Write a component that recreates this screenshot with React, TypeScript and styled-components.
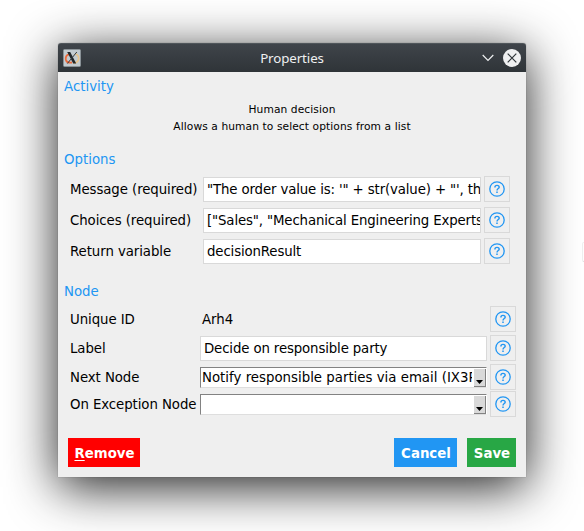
import React from "react";
import styled, { createGlobalStyle } from "styled-components";

const GlobalStyle = createGlobalStyle`
  * { box-sizing: border-box; }
  body { margin: 0; background: #fff; overflow: hidden; }
`;

const Desktop = styled.div`
  position: relative;
  width: 584px;
  height: 531px;
  padding: 43px 58px 0;
  overflow: hidden;
  background: #fff;
  font-family: "DejaVu Sans", sans-serif;
  font-size: 13.33px;
  color: #000;
`;

const EdgeTab = styled.div`
  position: absolute;
  left: 582px;
  top: 242px;
  width: 12px;
  height: 20px;
  border: 1px solid #eeeeee;
  border-bottom-color: #dddddd;
  border-radius: 2px;
`;

const Dialog = styled.main`
  width: 468px;
  height: 434px;
  background: #efefef;
  border-radius: 3px 3px 0 0;
  box-shadow: 0 0 1px rgba(0, 0, 0, 0.5), 0 10px 50px rgba(0, 0, 0, 0.88);
`;

const TitleBar = styled.header`
  display: grid;
  grid-template-columns: 50px 1fr 50px;
  align-items: center;
  height: 29px;
  padding: 0 5px;
  border-radius: 3px 3px 0 0;
  border-top: 1px solid #50565b;
  background: linear-gradient(#3f444a, #2f3438);
`;

const Title = styled.h1`
  margin: 0;
  text-align: center;
  font: 400 13.33px/20px "Noto Sans", sans-serif;
  letter-spacing: -0.1px;
  color: #eff0f1;
`;

const WindowControls = styled.div`
  display: flex;
  justify-content: flex-end;
  align-items: center;
  gap: 9px;
`;

const Icon = styled.svg`
  display: block;
  flex: none;
`;

const SectionTitle = styled.h2<{ $top?: number; $bottom?: number }>`
  margin: ${(p) => p.$top ?? 0}px 0 ${(p) => p.$bottom ?? 0}px 6px;
  padding-top: 2px;
  font-size: 13.33px;
  font-weight: 400;
  line-height: 26px;
  color: #2196f3;
`;

const Description = styled.p`
  margin: 0;
  padding-top: 2px;
  text-align: center;
  font-size: 10.67px;
  line-height: 15px;
  letter-spacing: 0.09px;
  white-space: nowrap;
`;

const Row = styled.div<{ $columns: string; $gap: number }>`
  display: grid;
  grid-template-columns: ${(p) => p.$columns} 26px;
  column-gap: 3px;
  align-items: end;
  height: 26px;
  margin: 0 0 ${(p) => p.$gap}px 12px;
`;

const Label = styled.label`
  padding-top: 2px;
  line-height: 24px;
  letter-spacing: -0.08px;
  white-space: nowrap;
`;

const StaticValue = styled.span`
  padding: 2px 0 0 2px;
  line-height: 24px;
`;

const Field = styled.div`
  height: 25px;
  padding-left: 3px;
  border: 1px solid #d9d9d9;
  background: #fff;
  line-height: 23px;
  letter-spacing: -0.14px;
  white-space: pre;
  overflow: hidden;
`;

const Combo = styled.div`
  display: flex;
  align-self: start;
  height: 21px;
  margin-top: 3px;
  border: 1px solid #828282;
  border-right-color: #fff;
  border-bottom-color: #dedede;
  background: #fff;
`;

const ComboText = styled.span`
  flex: 1;
  min-width: 0;
  margin-right: 2px;
  padding-left: 1px;
  line-height: 19px;
  white-space: nowrap;
  overflow: hidden;
`;

const ComboArrow = styled.span`
  display: flex;
  align-items: flex-end;
  justify-content: center;
  width: 12px;
  height: 18px;
  margin-top: 1px;
  padding-bottom: 2px;
  background: #d9d9d9;
  border-right: 1px solid #828282;
  border-bottom: 1px solid #828282;
`;

const HelpButton = styled.button`
  display: flex;
  align-items: center;
  justify-content: center;
  width: 26px;
  height: 26px;
  padding: 0;
  border: 1px solid #d9d9d9;
  background: #efefef;
`;

const Footer = styled.footer`
  display: flex;
  gap: 10px;
  margin: 21px 10px 0;
`;

const ActionButton = styled.button<{ $color: string; $width: number; $pushRight?: boolean }>`
  width: ${(p) => p.$width}px;
  height: 29px;
  margin-left: ${(p) => (p.$pushRight ? "auto" : "0")};
  padding: 1px 0 0 1px;
  border: 0;
  background: ${(p) => p.$color};
  color: #fff;
  font: 700 13.33px "DejaVu Sans", sans-serif;
  white-space: nowrap;
`;

const Mnemonic = styled.span`
  text-decoration: underline;
  text-underline-offset: 2px;
  text-decoration-thickness: 1px;
`;

const XLogo = () => (
  <Icon width="18" height="18" viewBox="0 0 18 18">
    <rect x="0.5" y="0.5" width="17" height="17" rx="1" fill="#c3cbd0" stroke="#8a9297" />
    <path d="M12.5 5C15 6 16 8 15.5 10.5C15 13 12 14 10 14" fill="none" stroke="#e9c48c" strokeWidth="1.6" />
    <path d="M6 5.3C3.5 6 2.4 8 2.8 10.5C3.3 13 6 14 9 13.5" fill="none" stroke="#ec6a3c" strokeWidth="1.8" />
    <path d="M4.2 3H7.2L13.2 14.5H10.2Z" fill="#22272a" />
    <path d="M13.8 3L4.4 14.5" stroke="#343a3e" strokeWidth="1" />
  </Icon>
);

const Help = () => (
  <HelpButton aria-label="Help">
    <Icon width="16" height="16" viewBox="0 0 16 16" fill="none" stroke="#2196f3">
      <circle cx="8" cy="8" r="7.2" strokeWidth="1.3" />
      <path d="M5.9 6.4C5.9 5.1 6.8 4.4 8 4.4S10.2 5.1 10.2 6.2C10.2 7.5 8 7.7 8 9.4" strokeWidth="1.4" />
      <path d="M8 10.5V12" strokeWidth="1.5" />
    </Icon>
  </HelpButton>
);

const ComboBox = ({ value }: { value?: string }) => (
  <Combo>
    <ComboText>{value}</ComboText>
    <ComboArrow>
      <Icon width="7" height="4" viewBox="0 0 7 4">
        <path d="M0 0H7L3.5 4Z" fill="#000" />
      </Icon>
    </ComboArrow>
  </Combo>
);

const options = [
  { label: "Message (required)", value: `"The order value is: '" + str(value) + "', the` },
  { label: "Choices (required)", value: `["Sales", "Mechanical Engineering Experts"` },
  { label: "Return variable", value: "decisionResult" },
];

const nodes = [
  { label: "Unique ID", gap: 3, control: <StaticValue>Arh4</StaticValue> },
  { label: "Label", gap: 3, control: <Field>Decide on responsible party</Field> },
  { label: "Next Node", gap: 1, control: <ComboBox value="Notify responsible parties via email (IX3P)" /> },
  { label: "On Exception Node", gap: 0, control: <ComboBox /> },
];

export default function App() {
  return (
    <Desktop>
      <GlobalStyle />
      <Dialog>
        <TitleBar>
          <XLogo />
          <Title>Properties</Title>
          <WindowControls>
            <Icon width="12" height="8" viewBox="0 0 12 8">
              <path d="M0.7 1L6 6.3L11.3 1" fill="none" stroke="#eff0f1" strokeWidth="1.2" />
            </Icon>
            <Icon width="18" height="18" viewBox="0 0 18 18">
              <circle cx="9" cy="9" r="9" fill="#eff0f1" />
              <path d="M4.7 4.7L13.3 13.3M13.3 4.7L4.7 13.3" stroke="#30363a" strokeWidth="1.2" />
            </Icon>
          </WindowControls>
        </TitleBar>

        <SectionTitle>Activity</SectionTitle>
        <Description>Human decision</Description>
        <Description>Allows a human to select options from a list</Description>

        <SectionTitle $top={11} $bottom={3}>Options</SectionTitle>
        {options.map((o) => (
          <Row key={o.label} $columns="130px 278px" $gap={5}>
            <Label>{o.label}</Label>
            <Field>{o.value}</Field>
            <Help />
          </Row>
        ))}

        <SectionTitle $top={13} $bottom={1}>Node</SectionTitle>
        {nodes.map((n) => (
          <Row key={n.label} $columns="127px 287px" $gap={n.gap}>
            <Label>{n.label}</Label>
            {n.control}
            <Help />
          </Row>
        ))}

        <Footer>
          <ActionButton $color="#ff0000" $width={72}><Mnemonic>R</Mnemonic>emove</ActionButton>
          <ActionButton $color="#2196f3" $width={63} $pushRight>Cancel</ActionButton>
          <ActionButton $color="#28a745" $width={49}>Save</ActionButton>
        </Footer>
      </Dialog>
      <EdgeTab />
    </Desktop>
  );
}
